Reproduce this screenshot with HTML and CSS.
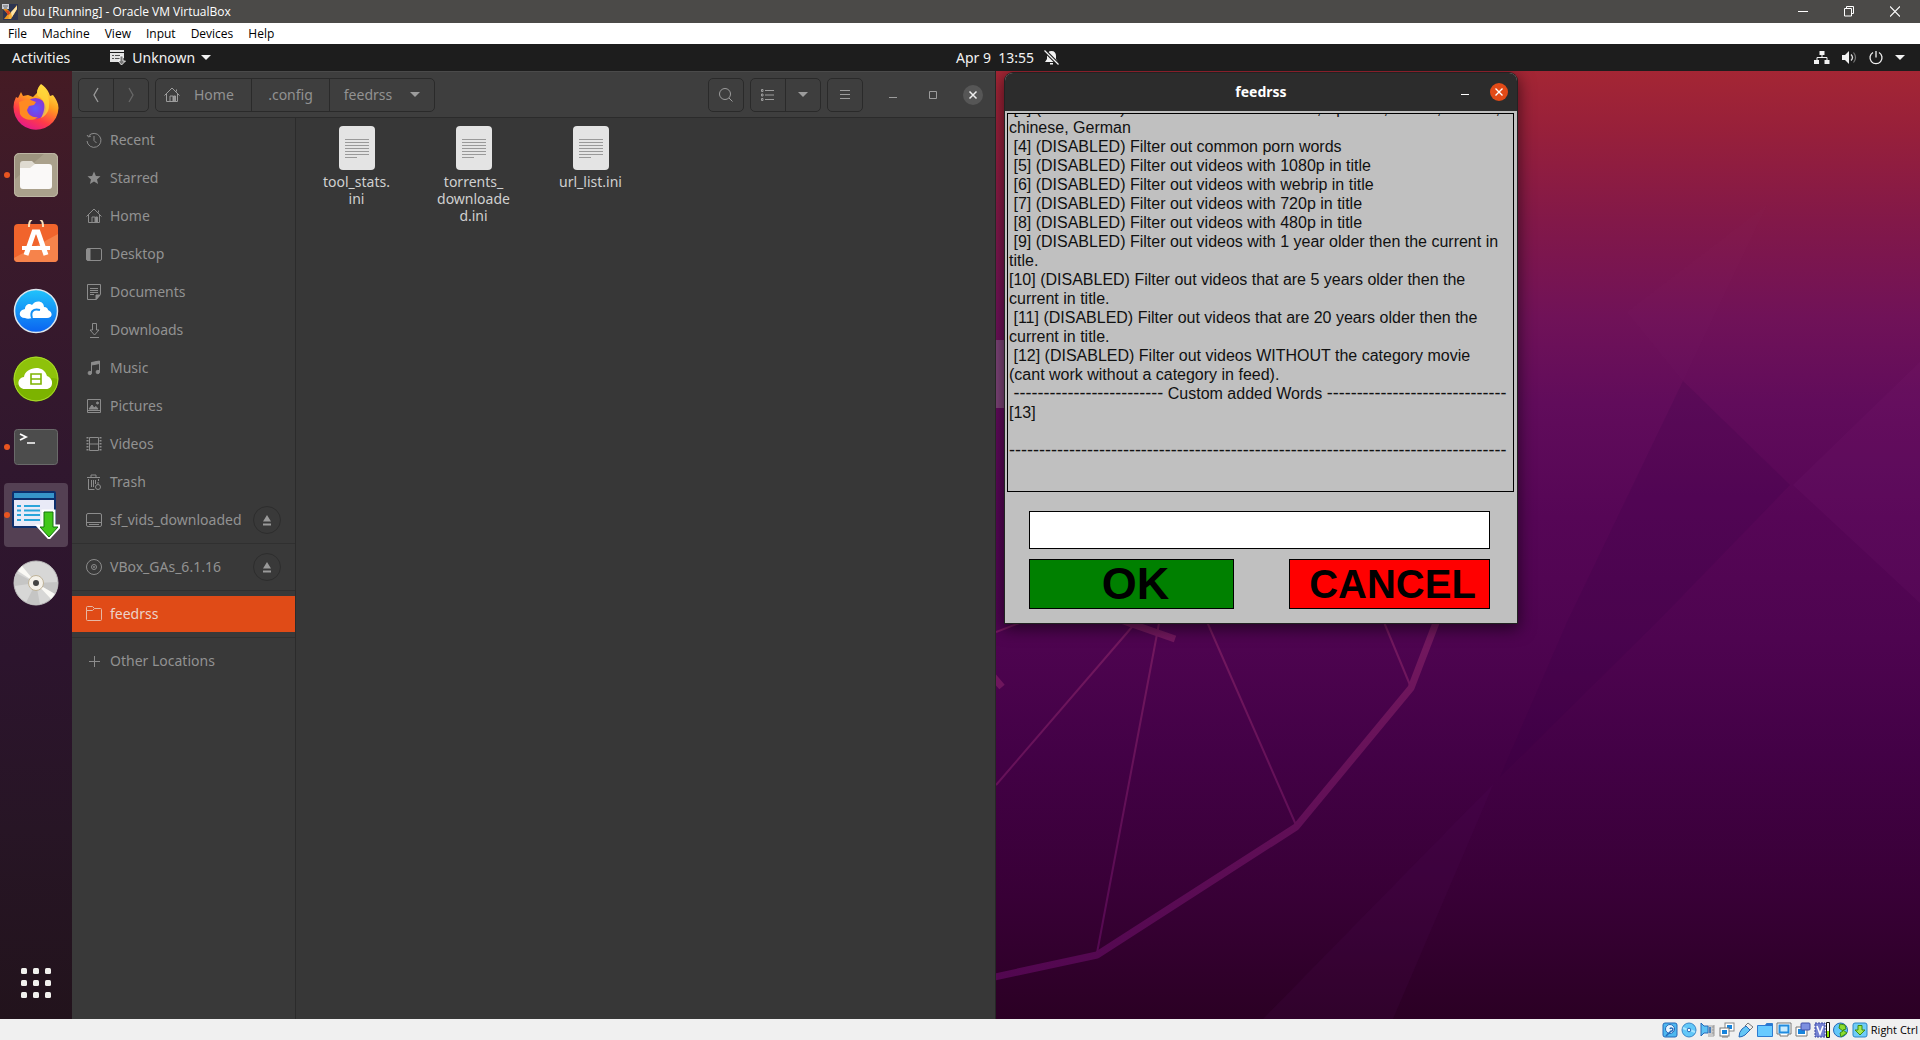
FILE: index.html
```html
<!DOCTYPE html>
<html lang="en">
<head>
<meta charset="utf-8">
<title>ubu [Running] - Oracle VM VirtualBox</title>
<link rel="stylesheet" href="styles.css">
</head>
<body>
<header class="host-title">
  <svg class="host-logo" viewBox="0 0 16 16"><rect x="1" y="0" width="15" height="16" fill="#2d3550"/><path d="M1 5l4 0 4 4-3 6H2l4-5z" fill="#e9951f"/><path d="M3 6l5 4 7-9v4l-6 10H6l1-4z" fill="#f6b13d"/><path d="M9 8l6-6v3l-5 8z" fill="#fbe3a8"/><path d="M3 6l4 1 1 3-2 1z" fill="#d8431d"/><rect width="7" height="5" fill="#c9ccd2"/><path d="M1 2h5M2 4h3" stroke="#666"/></svg>
  <h1>ubu [Running] - Oracle VM VirtualBox</h1>
  <div class="host-controls">
    <button aria-label="Minimize"><svg width="10" height="11" viewBox="0 0 10 11"><path d="M0 5.500h10" stroke="#fff"/></svg></button>
    <button aria-label="Restore"><svg width="10" height="11" viewBox="0 0 10 11"><path d="M.5 2.500h7v7.500h-7zM2.500 2.500v-2h7v7h-2" fill="none" stroke="#fff"/></svg></button>
    <button aria-label="Close"><svg width="10" height="11" viewBox="0 0 10 11"><path d="M0 .5l10 10M10 .5l-10 10" stroke="#fff" stroke-width="1.200"/></svg></button>
  </div>
</header>
<nav class="host-menu">
  <a href="#">File</a><a href="#">Machine</a><a href="#">View</a><a href="#">Input</a><a href="#">Devices</a><a href="#">Help</a>
</nav>
<div class="topbar">
  <div class="topbar-left">
    <button>Activities</button>
    <button class="app-menu">
      <svg width="16" height="16" viewBox="0 0 16 16"><path d="M0 0h14v2H0zM0 3h14v5h-2v4H0z" fill="#e3e3e3"/><path d="M2 5.500h2M5 5.500h5M2 8.500h2M5 8.500h5" stroke="#555"/><path d="M10 6h3v5h2.500L11.500 15 8 11h2z" fill="#777" stroke="#fff" stroke-width=".8"/></svg>
      Unknown
      <svg width="10" height="6" viewBox="0 0 10 6"><path d="M0 0h10L5 5z" fill="#f2f2f2"/></svg>
    </button>
  </div>
  <button class="clock"><span>Apr 9&nbsp; 13:55</span>
    <svg width="15" height="15" viewBox="0 0 15 15"><path d="M7.500 1c3 0 4.500 2 4.500 5v3l2 3H1l2-3V6c0-3 1.500-5 4.500-5zM6 13h3v1.500H6z" fill="#f2f2f2"/><path d="M0 0l15 15" stroke="#1d1d1d" stroke-width="3.500"/><path d="M.5 .5l14 14" stroke="#f2f2f2" stroke-width="1.300"/></svg>
  </button>
  <button class="tray" aria-label="System menu">
    <svg width="16" height="16" viewBox="0 0 16 16"><path d="M5.500 1h5v4h-5zM0 10h5v4H0zM10.500 10h5v4h-5z" fill="#f2f2f2"/><path d="M8 5v2.500M3 10V7.500h10V10" stroke="#f2f2f2" fill="none"/></svg>
    <svg width="16" height="16" viewBox="0 0 16 16"><path d="M1 5h3l4-4v13l-4-4H1z" fill="#f2f2f2"/><path d="M10 4.500q3 3 0 6" stroke="#ddd" fill="none" stroke-width="1.300"/><path d="M12.500 2.500q4 5 0 10" stroke="#777" fill="none" stroke-width="1.200"/></svg>
    <svg width="16" height="16" viewBox="0 0 16 16"><path d="M5 2.500a6 6 0 1 0 6 0M8 1v6.500" stroke="#f2f2f2" fill="none" stroke-width="1.300"/></svg>
    <svg width="10" height="6" viewBox="0 0 10 6"><path d="M0 0h10L5 5z" fill="#f2f2f2"/></svg>
  </button>
</div>

<main class="desktop">
  <nav class="dock">
    <button class="tile" aria-label="Firefox"><svg width="46" height="46" viewBox="0 0 46 46">
      <defs><linearGradient id="ff" x1=".8" y1="0" x2=".3" y2="1"><stop offset="0" stop-color="#fff14d"/><stop offset=".4" stop-color="#ff9d1f"/><stop offset=".72" stop-color="#ff3b48"/><stop offset="1" stop-color="#e3178f"/></linearGradient><radialGradient id="fp"><stop offset="0" stop-color="#5b5bff"/><stop offset="1" stop-color="#8a35d2"/></radialGradient></defs>
      <path d="M28 0c7 5 8 9 9 12l3-1c3 4 5.500 8 5.500 13A22.500 22.500 0 1 1 3 13l2 1 3-6 2 4 5-1 5 2 4-4c0-4 2-7 4-9z" fill="url(#ff)"/>
      <circle cx="22.500" cy="24.500" r="10.500" fill="url(#fp)"/>
      <path d="M6 18l9-3 8 3-2 3-5 1-2 4c1 5 6 8 11 7-5 5-15 3-18-3z" fill="#ff8a22"/><path d="M28 1c6 6 9 13 8 21 0 6-4 10-8 12 4-7 6-17-3-22-2-3-1-7 3-11z" fill="#ffd83b" opacity=".75"/></svg></button>
    <button class="tile running" aria-label="Files"><svg width="46" height="46" viewBox="0 0 46 46"><rect x="1" y="1" width="44" height="44" rx="5" fill="#9c937e"/><path d="M1 28L32 1h8a5 5 0 0 1 5 5v34a5 5 0 0 1-5 5H6a5 5 0 0 1-5-5z" fill="#aaa18c"/><rect x="1.500" y="1.500" width="43" height="43" rx="5" fill="none" stroke="#bdb6a4"/><path d="M7 12a3 3 0 0 1 3-3h9l3 3h14v8H7z" fill="#dfdbd1"/><path d="M7 16h10l5-4h14a3 3 0 0 1 3 3v19a3 3 0 0 1-3 3H10a3 3 0 0 1-3-3z" fill="#faf9f8"/></svg></button>
    <button class="tile" aria-label="Software"><svg width="46" height="46" viewBox="0 0 46 46"><rect x="1" y="4" width="44" height="38" rx="4" fill="#f1642c"/><path d="M1 38L45 14v24a4 4 0 0 1-4 4H5a4 4 0 0 1-4-4z" fill="#f6834b"/><path d="M16 7V5c0-9 14-9 14 0v2" fill="none" stroke="#fbe0b8" stroke-width="2"/><path d="M9 28h28" stroke="#fff" stroke-width="4"/><path d="M13 35L21 12h4l8 23" fill="none" stroke="#fff" stroke-width="5"/></svg></button>
    <button class="tile" aria-label="Cloud drive"><svg width="46" height="46" viewBox="0 0 46 46"><defs><linearGradient id="cb" x2="0" y2="1"><stop stop-color="#21c4fb"/><stop offset="1" stop-color="#0a63f1"/></linearGradient></defs><circle cx="23" cy="23" r="21.500" fill="url(#cb)" stroke="#dce6ee" stroke-width="1.500"/><path d="M12 30c-7 0-7-8 0-9 0-5 5-6 7-4 4-6 12-4 12 2 3 0 4 2 4 3 5 2 5 8-1 8H19c-3 1-5 1-7 0z" fill="#fff"/><path d="M19 30c-2-6 1-10 8-8" fill="none" stroke="#1290f5" stroke-width="2"/></svg></button>
    <button class="tile" aria-label="Video downloader"><svg width="46" height="46" viewBox="0 0 46 46"><circle cx="23" cy="23" r="22.500" fill="#7cb300"/><path d="M1 23a22 22 0 0 1 44 0c-14-4-30 6-43 6z" fill="#98cb10" opacity=".65"/><circle cx="23" cy="23" r="21.800" fill="none" stroke="#a9d82d"/><path d="M12 33c-8 0-9-11-1-12 1-9 19-14 23-1 7 2 7 13-1 13z" fill="#fff"/><path d="M18 18h10v10H18zM18 23h10" fill="none" stroke="#7eb400" stroke-width="1.600"/></svg></button>
    <button class="tile running" aria-label="Terminal"><svg width="46" height="46" viewBox="0 0 46 46"><rect x="1.500" y="5.500" width="43" height="35" rx="3" fill="#4c4c4c" stroke="#6a6a6a"/><path d="M7 10l6 3-6 3" fill="none" stroke="#fff" stroke-width="1.800"/><path d="M14 19h8" stroke="#fff" stroke-width="1.500"/></svg></button>
    <button class="tile running active" aria-label="Unknown"><svg width="48" height="48" viewBox="0 0 48 48"><rect x="1" y="1" width="42" height="35" rx="1" fill="#e9eaf7" stroke="#0d2f6d" stroke-width="2"/><path d="M2 2h40v5H2z" fill="#3795ca"/><path d="M2 8h40" stroke="#0d2f6d" stroke-width="2"/><path d="M5 15h4M5 19.500h4M5 24h4M5 29h4M12 15h16M12 19.500h16M12 24h16M12 29h16" stroke="#29a4da" stroke-width="2"/><path d="M31 20h11v15h6L37 47 26 35h5z" fill="#3fc01d" stroke="#fff" stroke-width="3"/><path d="M32 21h9v15h5l-9 10-9-10h4z" fill="#42c81a" stroke="#14740d"/></svg></button>
    <button class="tile" aria-label="Disc"><svg width="46" height="46" viewBox="0 0 46 46"><circle cx="23" cy="23" r="22" fill="#d7d7d6" stroke="#bcbcbc"/><path d="M23 23L1.500 26A22 22 0 0 1 3 13zM23 23l21.500-1A22 22 0 0 1 42 34zM23 23l4 21.500a22 22 0 0 1-14 -2z" fill="#c5c5c4"/><path d="M23 23L5 11l4-5zM23 23l19 11-4 5z" fill="#faf9f5"/><circle cx="23" cy="23" r="7.500" fill="#f4f1ea" stroke="#bfb398"/><circle cx="23" cy="23" r="3" fill="#444"/></svg></button>
    <button class="tile show-apps" aria-label="Show Applications"><svg width="30" height="30" viewBox="0 0 30 30" fill="#f2f1ee"><g id="dots"><rect width="6" height="6" rx="1.500"/><rect x="12" width="6" height="6" rx="1.500"/><rect x="24" width="6" height="6" rx="1.500"/></g><use href="#dots" y="12"/><use href="#dots" y="24"/></svg></button>
  </nav>

  <section class="files" aria-label="Files">
    <header class="files-bar">
      <div class="group">
        <button class="sq" aria-label="Back"><svg width="16" height="16" viewBox="0 0 16 16"><path d="M10 1L6 8l4 7" fill="none" stroke="#9c9c9c" stroke-width="1.300"/></svg></button>
        <button class="sq" aria-label="Forward"><svg width="16" height="16" viewBox="0 0 16 16"><path d="M6 1l4 7-4 7" fill="none" stroke="#686868" stroke-width="1.300"/></svg></button>
      </div>
      <div class="group path">
        <button class="crumb-home"><svg class="line" width="16" height="16" viewBox="0 0 16 16"><use href="#i-home"/></svg>Home</button>
        <button class="crumb-config">.config</button>
        <button class="crumb-last">feedrss <svg width="10" height="6" viewBox="0 0 10 6"><path d="M0 0h10L5 5z" fill="#9c9c9c"/></svg></button>
      </div>
      <div class="group search"><button class="sq" aria-label="Search"><svg class="line" width="16" height="16" viewBox="0 0 16 16"><circle cx="7" cy="7" r="5.500"/><path d="M11 11l3.500 3.500"/></svg></button></div>
      <div class="group">
        <button class="sq" aria-label="List view"><svg class="line" width="16" height="16" viewBox="0 0 16 16"><path d="M5 3.500h9M5 8h9M5 12.500h9"/><path d="M1.500 2.500h1.500v2H1.500zM1.500 7h1.500v2H1.500zM1.500 11.500h1.500v2H1.500z"/></svg></button>
        <button class="sq" aria-label="View options"><svg width="10" height="6" viewBox="0 0 10 6"><path d="M0 0h10L5 5z" fill="#9c9c9c"/></svg></button>
      </div>
      <div class="group"><button class="sq" aria-label="Menu"><svg class="line" width="16" height="16" viewBox="0 0 16 16"><path d="M3 3.500h10M3 7.500h10M3 11.500h10"/></svg></button></div>
      <div class="win-controls">
        <button aria-label="Minimize"><svg class="line" width="16" height="16" viewBox="0 0 16 16"><path d="M4 10.500h8"/></svg></button>
        <button aria-label="Maximize"><svg class="line" width="16" height="16" viewBox="0 0 16 16"><path d="M4.500 4.500h7v7h-7z"/></svg></button>
        <button aria-label="Close"><svg width="20" height="20" viewBox="0 0 20 20"><circle cx="10" cy="10" r="10" fill="#565656"/><path d="M6.500 6.500l7 7M13.500 6.500l-7 7" stroke="#eee" stroke-width="1.500"/></svg></button>
      </div>
    </header>
    <div class="files-body">
      <nav class="places">
        <a href="#"><svg viewBox="0 0 16 16"><path d="M2.500 4A7 7 0 1 1 1 9M1 3l1.500 2L5 4M8 4v4.500l2.500 2.500"/></svg>Recent</a>
        <a href="#"><svg viewBox="0 0 16 16"><path d="M8 1.500l1.900 4.400 4.600.4-3.500 3.100 1.100 4.600L8 11.500 3.900 14 5 9.400 1.500 6.300l4.600-.4z" fill="#8c8c8c" stroke="none"/></svg>Starred</a>
        <a href="#"><svg viewBox="0 0 16 16"><g id="i-home"><path d="M.5 8.500L8 1l7.500 7.500M12.500 2.500v2M2.500 7v7.500h11V7M6 14V9h3v5"/><path d="M9.500 9h2v5.500h-2z" fill="currentColor"/></g></svg>Home</a>
        <a href="#"><svg viewBox="0 0 16 16"><rect x=".5" y="2.500" width="15" height="12" rx="1.500"/><path d="M1 3h3v11H1z" fill="#8c8c8c"/></svg>Desktop</a>
        <a href="#"><svg viewBox="0 0 16 16"><path d="M1.500.5h13v10l-4 5h-9zM4 4.500h8M4 6.500h8M4 8.500h8M4 10.500h4"/><path d="M10 15v-4h4z" fill="#8c8c8c"/></svg>Documents</a>
        <a href="#"><svg viewBox="0 0 16 16"><path d="M6.500 1.500h4V8h2.500l-4.500 5L4 8h2.500zM4 15.500h9"/></svg>Downloads</a>
        <a href="#"><svg viewBox="0 0 16 16"><path d="M5.500 13V3l8-1.500v10.500"/><path d="M5.500 2.500l8-1.500v2.500l-8 1.500z" fill="#8c8c8c"/><circle cx="3.800" cy="13" r="1.700" fill="#8c8c8c"/><circle cx="11.800" cy="12" r="1.700" fill="#8c8c8c"/></svg>Music</a>
        <a href="#"><svg viewBox="0 0 16 16"><path d="M1.500 1.500h13v13h-13zM2 12.500h12"/><path d="M3 11l3-4 2 3 2-1.500 2 2.500z" fill="#8c8c8c"/><circle cx="11.500" cy="5" r="1" fill="#8c8c8c"/></svg>Pictures</a>
        <a href="#"><svg viewBox="0 0 16 16"><path d="M3.500 1.500h9v13h-9zM3.500 8h9"/><path d="M1.500 1v14M14.500 1v14" stroke-width="2" stroke-dasharray="1.500 1.500"/></svg>Videos</a>
        <a href="#"><svg viewBox="0 0 16 16"><path d="M1 3.500h13M5 3V1h5v2M2.500 5v10.500h6M12.500 5v2M5.500 6v7M7.500 6v7M9.500 6v4"/><circle cx="12" cy="13" r="2.500"/><path d="M12 8v2"/></svg>Trash</a>
        <a href="#"><svg viewBox="0 0 16 16"><rect x=".5" y="1.500" width="15" height="13" rx="1.500"/><path d="M1 10.500h14M3 12.500h10"/></svg>sf_vids_downloaded<button class="eject" aria-label="Eject"><svg viewBox="0 0 16 16"><g id="i-eject"><path d="M8 3l4 6.500H4zM4 11.500h8v2H4z" fill="#9a9a9a" stroke="none"/></g></svg></button></a>
        <hr>
        <a href="#"><svg viewBox="0 0 16 16"><circle cx="8" cy="8" r="7.500"/><circle cx="8" cy="8" r="2.500"/><circle cx="8" cy="8" r=".6"/></svg>VBox_GAs_6.1.16<button class="eject" aria-label="Eject"><svg viewBox="0 0 16 16"><use href="#i-eject"/></svg></button></a>
        <hr>
        <a href="#" class="current"><svg viewBox="0 0 16 16"><path d="M.5 4.500v-3q0-1 1-1h5l2 2h6q1 0 1 1v10q0 1-1 1h-13q-1 0-1-1v-9h6l2-2"/></svg>feedrss</a>
        <hr>
        <a href="#"><svg viewBox="0 0 16 16"><path d="M3 8.500h11M8.500 3v11"/></svg>Other Locations</a>
      </nav>
      <div class="icon-view">
        <a href="#" class="file"><svg width="36" height="44" viewBox="0 0 36 44"><g id="i-doc"><rect width="36" height="44" rx="4" fill="#e4e4e4"/><path d="M6 13.500h24M6 16.500h24M6 19.500h24M6 22.500h24M6 25.500h24M6 28.500h24M6 31.500h12" stroke="#999"/></g></svg>tool_stats.<br>ini</a>
        <a href="#" class="file"><svg width="36" height="44" viewBox="0 0 36 44"><use href="#i-doc"/></svg>torrents_<br>downloade<br>d.ini</a>
        <a href="#" class="file"><svg width="36" height="44" viewBox="0 0 36 44"><use href="#i-doc"/></svg>url_list.ini</a>
      </div>
    </div>
  </section>

  <section class="workspace">
    <svg class="wallpaper" viewBox="996 71 924 948" preserveAspectRatio="none">
      <defs>
        <linearGradient id="bg" x2="0" y2="1"><stop offset="0" stop-color="#a42634"/><stop offset=".06" stop-color="#98203a"/><stop offset=".16" stop-color="#821849"/><stop offset=".26" stop-color="#701258"/><stop offset=".35" stop-color="#610c5b"/><stop offset=".47" stop-color="#560656"/><stop offset=".6" stop-color="#4e0450"/><stop offset=".72" stop-color="#430146"/><stop offset=".87" stop-color="#380036"/><stop offset="1" stop-color="#2b0024"/></linearGradient>
        <linearGradient id="ln" gradientUnits="userSpaceOnUse" x1="0" y1="620" x2="0" y2="980"><stop stop-color="#74195f"/><stop offset="1" stop-color="#520750"/></linearGradient>
      </defs>
      <rect x="996" y="71" width="924" height="948" fill="url(#bg)"/>
      <path d="M1683 381L1790 485 1659 620 1500 777 1568 620z" fill="#300040" opacity=".15"/>
      <path d="M1920 362L1793 485 1920 603z" fill="#8a2a80" opacity=".1"/>
      <path d="M1494 783L1263 1019H1393z" fill="#5a1060" opacity=".12"/>
      <path d="M1627 312L1683 381 1767 205z" fill="#a03080" opacity=".03"/>
      <path d="M996 340h10v68h-10z" fill="#7d4478"/>
      <g fill="none" stroke="url(#ln)">
        <path d="M1439 615L1411 688 1296 827 1097 955 990 978" stroke-width="7" stroke-linejoin="bevel"/>
        <path d="M1115 618L1175 639M990 673l12 14" stroke-width="7"/>
        <path d="M1138 620L996 785M1160 618L1097 953M1204 615L1296 825M1381 615L1410 685M996 632L1022 622" stroke-width="2"/>
      </g>
    </svg>
    <form class="dialog" aria-label="feedrss">
      <header class="dialog-bar">
        <h2>feedrss</h2>
        <button type="button" aria-label="Minimize"><svg width="18" height="18" viewBox="0 0 18 18"><path d="M5 11.500h8" stroke="#fff"/></svg></button>
        <button type="button" aria-label="Close"><svg width="18" height="18" viewBox="0 0 18 18"><circle cx="9" cy="9" r="9" fill="#e24a17"/><path d="M5.500 5.500l7 7M12.500 5.500l-7 7" stroke="#fff" stroke-width="1.400"/></svg></button>
      </header>
      <div class="dialog-body">
        <div class="log"><p> [3] (DISABLED) Filter out videos with Hindi, Spanish, Arabic, French,</p><p>chinese, German</p><p> [4] (DISABLED) Filter out common porn words</p><p> [5] (DISABLED) Filter out videos with 1080p in title</p><p> [6] (DISABLED) Filter out videos with webrip in title</p><p> [7] (DISABLED) Filter out videos with 720p in title</p><p> [8] (DISABLED) Filter out videos with 480p in title</p><p> [9] (DISABLED) Filter out videos with 1 year older then the current in</p><p>title.</p><p>[10] (DISABLED) Filter out videos that are 5 years older then the</p><p>current in title.</p><p> [11] (DISABLED) Filter out videos that are 20 years older then the</p><p>current in title.</p><p> [12] (DISABLED) Filter out videos WITHOUT the category movie</p><p>(cant work without a category in feed).</p><p> <span class="rule">-------------------------</span> Custom added Words <span class="rule">------------------------------</span></p><p>[13]</p><p> </p><p><span class="rule">-----------------------------------------------------------------------------------</span></p></div>
        <input type="text" class="entry" aria-label="Selection">
        <div class="actions">
          <button type="button" class="ok">OK</button>
          <button type="button" class="cancel">CANCEL</button>
        </div>
      </div>
    </form>
  </section>
</main>

<footer class="status">
  <svg viewBox="0 0 16 16"><rect x="1" y="1" width="14" height="14" rx="2" fill="#4db8f0" stroke="#2468b8"/><circle cx="8" cy="7" r="4.500" fill="#e8f6ff" stroke="#2468b8"/><path d="M8 7a1.500 1.500 0 1 1 1 2l-5 5" fill="none" stroke="#2468b8" stroke-width="1.500"/></svg>
  <svg viewBox="0 0 16 16"><circle cx="8" cy="8" r="7" fill="#62c8f8" stroke="#3a86c8"/><path d="M2 6l5 2M9 8l5 2" stroke="#a8e6ff" stroke-width="2"/><circle cx="8" cy="8" r="1.800" fill="#fff" stroke="#2468b8"/></svg>
  <svg viewBox="0 0 16 16"><path d="M8 3h6v12H8z" fill="#c8c8c8"/><path d="M14 3v11M12 5h2M12 8h2M12 11h2" stroke="#999"/><path d="M1 1l3 3h4v7H4l-3 3z" fill="#5cc2f5" stroke="#2468b8"/><path d="M10 5v6" stroke="#2468b8" stroke-width="1.500"/></svg>
  <svg viewBox="0 0 16 16"><rect x="6" y="1" width="9" height="8" fill="#fff" stroke="#888"/><path d="M8 3h5v4H8z" fill="#1683dc"/><rect x="1" y="6" width="9" height="8" fill="#fff" stroke="#777"/><path d="M3 8h5v4H3z" fill="#1683dc"/><path d="M3 15h6" stroke="#777"/></svg>
  <svg viewBox="0 0 16 16"><path d="M10 1l5 4-3 3-5-4z" fill="#eee" stroke="#777"/><path d="M8 4l4 4-5 5q-3 2-6 2 0-5 3-8z" fill="#65c7f6" stroke="#2468b8"/></svg>
  <svg viewBox="0 0 16 16"><path d="M.5 3.500h8l1-2h6v13H.5z" fill="#68caff" stroke="#2e7bd0"/><path d="M9 2h6v2H8z" fill="#2877d3"/></svg>
  <svg viewBox="0 0 16 16"><path d="M1 1h14v11h-3v2H4v-2H1z" fill="#fff" stroke="#777"/><path d="M3.500 3.500h9v7h-9z" fill="#c7eaff" stroke="#1f8be0" stroke-width="2"/></svg>
  <svg viewBox="0 0 16 16"><path d="M1 5h11v9H1z" fill="#fff" stroke="#777"/><path d="M3 7h7v5H3z" fill="#1683dc"/><rect x="6" y="1" width="9" height="7" rx="1" fill="#7d8fe0" stroke="#4350a8"/></svg>
  <svg viewBox="0 0 16 16"><rect x="1" y="1" width="10" height="14" fill="#7481d2" stroke="#3b49a0" stroke-dasharray="2 1"/><path d="M3 4l3 8 3-8" fill="none" stroke="#fff" stroke-width="1.600"/><path d="M12.500.5h3v15h-3z" fill="#fff" stroke="#111"/><path d="M13 9h2v6h-2z" fill="#8de300"/></svg>
  <svg viewBox="0 0 16 16"><circle cx="7.500" cy="8" r="7" fill="#62c8f8" stroke="#2468b8"/><path d="M7 2l5 1 1 4-3 1 4 3-6 4-1-4 3-2-4-3z" fill="#8bdc2e" stroke="#3e8b13"/></svg>
  <svg viewBox="0 0 16 16"><rect x="1" y="1" width="14" height="14" rx="2" fill="#70ccf7" stroke="#2f86c6"/><path d="M6 3.500h4V8h3l-5 5-5-5h3z" fill="#a5e84c" stroke="#3e8b13"/></svg>
  <span>Right Ctrl</span>
</footer>
</body>
</html>
```
FILE: styles.css
```css
* { box-sizing: border-box; }
body {
  margin: 0;
  min-height: 100vh;
  display: flex;
  flex-direction: column;
  font: 14px/18px "Noto Sans", "Open Sans", sans-serif;
  background: #2b0024;
}
button {
  margin: 0;
  padding: 0;
  border: 0;
  background: none;
  color: inherit;
  font: inherit;
  display: flex;
  align-items: center;
  justify-content: center;
}
a { color: inherit; text-decoration: none; }
svg { display: block; flex: none; }
h1, h2, p { margin: 0; }

/* Host window */
.host-title {
  height: 23px;
  display: flex;
  align-items: center;
  gap: 5px;
  padding: 0 2px;
  background: #4b4a48;
  color: #fff;
  font-family: "Open Sans", sans-serif;
}
.host-logo { width: 16px; height: 16px; }
.host-title h1 { font-size: 12px; font-weight: 400; }
.host-controls { display: flex; margin-left: auto; }
.host-controls button { width: 46px; height: 20px; }
.host-menu {
  height: 21px;
  display: flex;
  align-items: center;
  gap: 15px;
  padding: 0 8px;
  background: #fff;
  color: #000;
  font: 12px/18px "Open Sans", sans-serif;
}

/* Guest top bar */
.topbar {
  height: 27px;
  display: grid;
  grid-template-columns: 1fr auto 1fr;
  align-items: center;
  padding: 0 15px 0 12px;
  background: #1d1d1d;
  color: #f2f2f2;
}
.topbar-left { display: flex; gap: 40px; }
.app-menu { gap: 6px; }
.clock { gap: 10px; padding-left: 98px; }
.tray { justify-self: end; gap: 11px; }

.desktop {
  flex: 1;
  display: grid;
  grid-template-columns: 72px minmax(0, 1fr) minmax(0, 1fr);
}

/* Dock */
.dock {
  display: flex;
  flex-direction: column;
  gap: 4px;
  padding: 4px;
  background: linear-gradient(#451b24, #3a1a2b 18%, #30172e 42%, #2c142d 62%, #271525 80%, #22131c);
}
.tile { position: relative; width: 64px; height: 64px; border-radius: 4px; }
.tile.active { background: #544053; }
.running::before {
  content: "";
  position: absolute;
  left: 0;
  top: 29px;
  width: 6px;
  height: 6px;
  border-radius: 50%;
  background: #e95420;
}
.show-apps { margin-top: auto; }

/* File manager */
.files {
  display: flex;
  flex-direction: column;
  background: #373737;
  color: #929292;
  border-right: 1px solid #262626;
}
.files-bar {
  height: 47px;
  display: flex;
  align-items: center;
  gap: 6px;
  padding: 0 5px 0 6px;
  background: #3e3e3e;
  border-top: 1px solid #4a4a4a;
  border-bottom: 1px solid #2b2b2b;
}
.group { display: flex; height: 34px; border: 1px solid #2a2a2a; border-radius: 5px; }
.group button + button { border-left: 1px solid #2a2a2a; }
.sq { width: 34px; }
.group button.sq + .sq { width: 35px; }
.line { fill: none; stroke: #9c9c9c; }
.crumb-home { width: 95px; gap: 14px; padding-left: 8px; justify-content: flex-start; color: #929292; }
.crumb-config { width: 78px; }
.crumb-last { width: 105px; gap: 18px; }
.search { margin-left: auto; }
.win-controls { display: flex; gap: 20px; padding: 0 7px 0 14px; }
.win-controls button { width: 20px; height: 20px; }
.files-body { flex: 1; display: flex; }
.places {
  width: 224px;
  display: flex;
  flex-direction: column;
  gap: 2px;
  padding: 4px 0;
  background: #393939;
  border-right: 1px solid #2b2b2b;
}
.places a { height: 36px; display: flex; align-items: center; gap: 8px; padding: 0 14px; white-space: nowrap; }
.places svg { width: 16px; height: 16px; fill: none; stroke: #8c8c8c; }
.places hr { width: 100%; margin: 3px 0; border: 0; border-top: 1px solid #303030; }
.places a.current { background: #e04b17; color: #ecd3c9; }
.places a.current svg { stroke: #e6b8a5; }
.eject { width: 28px; height: 28px; margin-left: auto; border: 1px solid #2d2d2d; border-radius: 50%; }
.icon-view { display: flex; align-items: flex-start; padding: 8px 2px; color: #d0d0d0; }
.file {
  width: 117px;
  display: flex;
  flex-direction: column;
  align-items: center;
  text-align: center;
  line-height: 17px;
}
.file svg { margin-bottom: 3px; }

/* Workspace and dialog */
.workspace { position: relative; overflow: hidden; }
.wallpaper { position: absolute; width: 100%; height: 100%; }
.dialog {
  position: absolute;
  left: 9px;
  top: 2px;
  width: 512px;
  border-radius: 8px 8px 0 0;
  background: #c0c0c0;
  box-shadow: 0 0 0 1px #222, 0 4px 16px 2px rgba(0, 0, 0, .55);
}
.dialog-bar {
  height: 38px;
  display: grid;
  grid-template-columns: 1fr 18px 18px;
  gap: 16px;
  align-items: center;
  padding: 0 9px;
  border-radius: 8px 8px 0 0;
  background: #2c2c2c;
  color: #fff;
}
.dialog-bar h2 { font-size: 14px; line-height: 18px; text-align: center; padding-left: 68px; }
.dialog-body {
  display: flex;
  flex-direction: column;
  padding: 2px 3px 14px 2px;
  font-family: "Liberation Sans", Arial, sans-serif;
  color: #111;
}
.log {
  height: 379px;
  display: flex;
  flex-direction: column;
  overflow: hidden;
  padding: 0 1px;
  border: 1px solid #000;
  white-space: pre;
  font-size: 16px;
  line-height: 19px;
}
.log p { flex: none; height: 19px; }
.log p:first-child { margin-top: -15px; }
.rule { font-size: 18px; }
.entry { height: 38px; margin: 19px 24px 10px 22px; border: 1px solid #000; background: #fff; }
.actions { display: flex; justify-content: space-between; margin: 0 24px 0 22px; }
.actions button { height: 50px; border: 1px solid #000; font-weight: 700; color: #000; }
.actions .ok { width: 205px; padding-left: 8px; background: #008000; font-size: 45px; }
.actions .cancel { width: 201px; padding-left: 6px; background: #f00; font-size: 40px; }

/* Status bar */
.status {
  height: 21px;
  display: flex;
  align-items: center;
  justify-content: flex-end;
  gap: 3px;
  padding: 0 2px;
  background: #f0f0f0;
  color: #000;
  font: 11px/18px "Open Sans", sans-serif;
}
.status svg { width: 16px; height: 16px; }
```
